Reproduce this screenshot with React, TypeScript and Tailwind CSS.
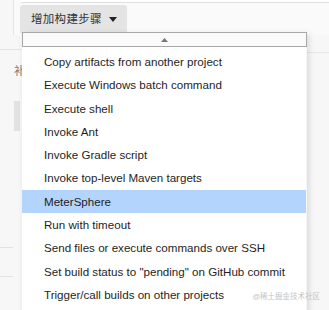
import React from 'react';

const items = [
  'Copy artifacts from another project',
  'Execute Windows batch command',
  'Execute shell',
  'Invoke Ant',
  'Invoke Gradle script',
  'Invoke top-level Maven targets',
  'MeterSphere',
  'Run with timeout',
  'Send files or execute commands over SSH',
  'Set build status to "pending" on GitHub commit',
  'Trigger/call builds on other projects',
];

const selected = 'MeterSphere';

export default function App() {
  return (
    <div
      className="relative w-[329px] h-[310px] overflow-hidden bg-[#f7f7f7] text-[#1e1e1e]"
      style={{ fontFamily: '"Liberation Sans", Arial, "Noto Sans CJK SC", sans-serif' }}
    >
      {/* page behind the menu */}
      <div className="flex h-full">
        <div className="w-[13px] flex flex-col">
          <div className="h-[50px] border-b border-[#e2e2e2]" />
          <div className="flex-1" />
          <div className="h-[30px] border-t border-b border-[#e2e2e2] mb-[33px]" />
        </div>
        <div className="flex-1 flex flex-col">
          <div className="h-[35px] border-l border-[#e4e4e4] bg-[#fafafa]">
            <div className="h-[3px] ml-[7px] border-b border-[#e0e0e0] bg-white" />
            <div className="ml-[6px] mt-[2px] flex items-center gap-[7px] w-[107px] h-[29px] rounded-[3px] bg-[#e4e4e4] pl-[11px] text-[11.5px] text-[#333] whitespace-nowrap">
              <span className="tracking-[0.3px]">增加构建步骤</span>
              <svg width="8" height="5" viewBox="0 0 8 5">
                <path d="M0 0h8L4 5z" fill="#222" />
              </svg>
            </div>
          </div>
          <div className="flex">
            <div className="w-[9px] flex flex-col">
              <div className="h-[15px] border-b border-[#e2e2e2]" />
              <div className="mt-[16px] ml-[1px] text-[11px] text-[#777] leading-none">补</div>
              <div className="mt-[24px] ml-[1px] w-[6px] h-[30px] bg-[#e2e2e2]" />
            </div>
            <div className="flex-1" />
            <div className="w-[22px] mt-[17px] border-t border-[#e6e6e6]" />
          </div>
        </div>
      </div>

      {/* dropdown menu */}
      <div className="absolute left-[22px] top-[32px] w-[285px] shadow-[2px_2px_6px_rgba(0,0,0,0.12)]">
        <div className="h-[15px] flex items-center justify-center border border-[#a8a8a8] bg-[#fafafa]">
          <svg width="7" height="4" viewBox="0 0 7 4">
            <path d="M0 4L3.5 0 7 4z" fill="#777" />
          </svg>
        </div>
        <div className="bg-white pt-[3px] pb-[10px] w-[284px]">
          {items.map((it) => (
            <div
              key={it}
              className={`h-[23.3px] flex items-center pl-[22px] text-[11.6px] whitespace-nowrap ${
                it === selected ? 'bg-[#b3d4fc]' : ''
              }`}
            >
              {it}
            </div>
          ))}
        </div>
      </div>

      <div className="absolute right-[9px] bottom-[10px] text-[7.5px] text-[#c4c4c4] leading-none">
        @稀土掘金技术社区
      </div>
    </div>
  );
}
